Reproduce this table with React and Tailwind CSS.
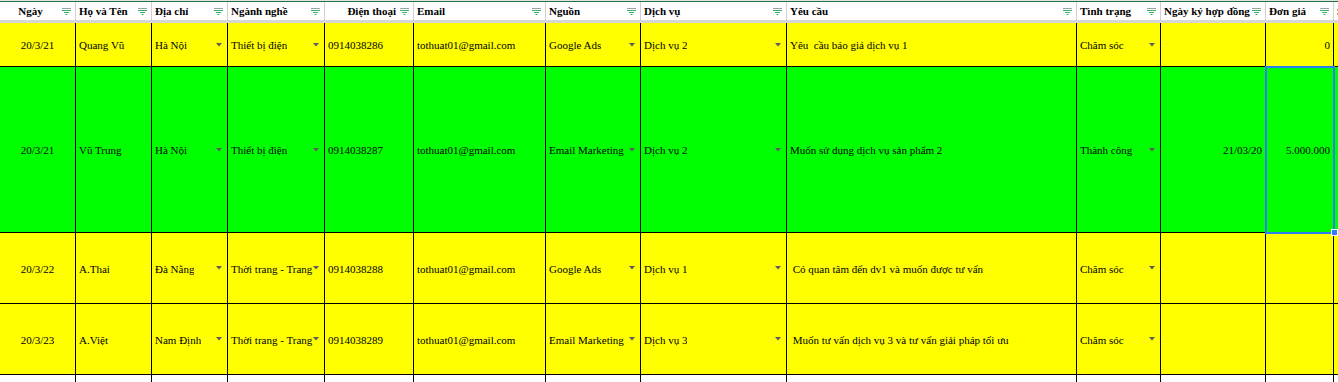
import React from 'react';

const cols = [
    { name: 'Ngày', w: 'w-[76px]', head: 'justify-center', body: 'justify-center' },
    { name: 'Họ và Tên', w: 'w-[76px]', head: 'justify-start', body: 'justify-start' },
    { name: 'Địa chỉ', w: 'w-[76px]', head: 'justify-start', body: 'justify-start', drop: true },
    { name: 'Ngành nghề', w: 'w-[97px]', head: 'justify-start', body: 'justify-start', drop: true },
    { name: 'Điện thoại', w: 'w-[89px]', head: 'justify-end', body: 'justify-start' },
    { name: 'Email', w: 'w-[132px]', head: 'justify-start', body: 'justify-start' },
    { name: 'Nguồn', w: 'w-[95px]', head: 'justify-start', body: 'justify-start', drop: true },
    { name: 'Dịch vụ', w: 'w-[146px]', head: 'justify-start', body: 'justify-start', drop: true },
    { name: 'Yêu cầu', w: 'w-[290px]', head: 'justify-start', body: 'justify-start' },
    { name: 'Tình trạng', w: 'w-[84px]', head: 'justify-start', body: 'justify-start', drop: true },
    { name: 'Ngày ký hợp đồng', w: 'w-[105px]', head: 'justify-start', body: 'justify-end' },
    { name: 'Đơn giá', w: 'w-[68px]', head: 'justify-start', body: 'justify-end' },
    { name: 'Số lượng', w: 'w-[70px]', head: 'justify-start', body: 'justify-start' },
];

const rows = [
    {
        h: 'h-[44px]', bg: 'bg-[#ffff00]',
        cells: ['20/3/21', 'Quang Vũ', 'Hà Nội', 'Thiết bị điện', '0914038286', 'tothuat01@gmail.com', 'Google Ads', 'Dịch vụ 2', 'Yêu  cầu báo giá dịch vụ 1', 'Chăm sóc', '', '0', ''],
    },
    {
        h: 'h-[166px]', bg: 'bg-[#00ff00]',
        cells: ['20/3/21', 'Vũ Trung', 'Hà Nội', 'Thiết bị điện', '0914038287', 'tothuat01@gmail.com', 'Email Marketing', 'Dịch vụ 2', 'Muốn sử dụng dịch vụ sản phẩm 2', 'Thành công', '21/03/20', '5.000.000', '1'],
    },
    {
        h: 'h-[71px]', bg: 'bg-[#ffff00]',
        cells: ['20/3/22', 'A.Thai', 'Đà Nẵng', 'Thời trang - Trang sức', '0914038288', 'tothuat01@gmail.com', 'Google Ads', 'Dịch vụ 1', ' Có quan tâm đến dv1 và muốn được tư vấn', 'Chăm sóc', '', '', ''],
    },
    {
        h: 'h-[71px]', bg: 'bg-[#ffff00]',
        cells: ['20/3/23', 'A.Việt', 'Nam Định', 'Thời trang - Trang sức', '0914038289', 'tothuat01@gmail.com', 'Email Marketing', 'Dịch vụ 3', ' Muốn tư vấn dịch vụ 3 và tư vấn giải pháp tối ưu', 'Chăm sóc', '', '', ''],
    },
];

const FilterIcon = () => (
    <svg width="9" height="7" viewBox="0 0 9 7" className="shrink-0">
        <rect x="0" y="0" width="9" height="1" fill="#9aa5a0" />
        <rect x="0" y="2" width="9" height="1" fill="#3aaf6a" />
        <rect x="2" y="4" width="5" height="1" fill="#3aaf6a" />
        <rect x="3.5" y="6" width="2" height="1" fill="#3aaf6a" />
    </svg>
);

const DropArrow = () => (
    <svg width="6" height="4" viewBox="0 0 6 4" className="absolute right-[5px] top-1/2 -translate-y-1/2">
        <path d="M0 0 L6 0 L3 3.5 Z" fill="#5c5c5c" />
    </svg>
);

export default function App() {
    return (
        <div className="relative w-[1338px] h-[382px] overflow-hidden bg-white font-['Liberation_Serif','Times_New_Roman',serif] text-[11px] text-black">
            <div className="h-[1px] bg-[#e3e3e3]" />
            <div className="h-[1px] bg-[#217346]" />
            <div className="flex h-[21px] bg-white border-b-[3px] border-[#d6d6d6] w-max">
                {cols.map((c, i) => (
                    <div key={i} className={`${c.w} shrink-0 flex items-center gap-1 pl-[3px] pr-[4px] pt-[1px] border-r border-[#d0d0d0] font-bold overflow-hidden whitespace-nowrap`}>
                        <div className={`flex-1 flex ${c.head} min-w-0`}>{c.name}</div>
                        <FilterIcon />
                    </div>
                ))}
            </div>
            {rows.map((r, ri) => (
                <div key={ri} className={`flex ${r.h} ${r.bg} border-b border-black w-max`}>
                    {cols.map((c, ci) => (
                        <div key={ci} className={`${c.w} shrink-0 relative flex items-center ${c.body} px-[3px] pt-[2px] border-r border-black overflow-hidden whitespace-pre`}>
                            <span className={c.drop ? 'max-w-[calc(100%-8px)] overflow-hidden' : ''}>{r.cells[ci]}</span>
                            {c.drop && <DropArrow />}
                        </div>
                    ))}
                </div>
            ))}
            <div className="flex h-[20px] bg-white w-max">
                {cols.map((c, ci) => (
                    <div key={ci} className={`${c.w} shrink-0 border-r border-black`} />
                ))}
            </div>
            {/* selected cell */}
            <div className="absolute left-[1265px] top-[66px] w-[70px] h-[168px] border-2 border-[#2e7cf6]" />
            <div className="absolute left-[1331px] top-[229px] w-[7px] h-[7px] bg-[#2e7cf6] border border-white" />
        </div>
    );
}
